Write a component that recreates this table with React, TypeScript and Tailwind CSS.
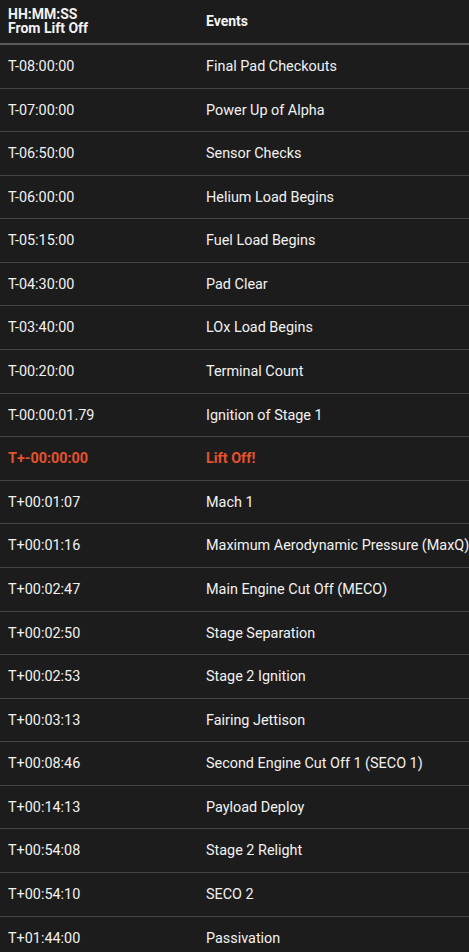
const rows: [string, string, boolean?][] = [
  ['T-08:00:00', 'Final Pad Checkouts'],
  ['T-07:00:00', 'Power Up of Alpha'],
  ['T-06:50:00', 'Sensor Checks'],
  ['T-06:00:00', 'Helium Load Begins'],
  ['T-05:15:00', 'Fuel Load Begins'],
  ['T-04:30:00', 'Pad Clear'],
  ['T-03:40:00', 'LOx Load Begins'],
  ['T-00:20:00', 'Terminal Count'],
  ['T-00:00:01.79', 'Ignition of Stage 1'],
  ['T+-00:00:00', 'Lift Off!', true],
  ['T+00:01:07', 'Mach 1'],
  ['T+00:01:16', 'Maximum Aerodynamic Pressure (MaxQ)'],
  ['T+00:02:47', 'Main Engine Cut Off (MECO)'],
  ['T+00:02:50', 'Stage Separation'],
  ['T+00:02:53', 'Stage 2 Ignition'],
  ['T+00:03:13', 'Fairing Jettison'],
  ['T+00:08:46', 'Second Engine Cut Off 1 (SECO 1)'],
  ['T+00:14:13', 'Payload Deploy'],
  ['T+00:54:08', 'Stage 2 Relight'],
  ['T+00:54:10', 'SECO 2'],
  ['T+01:44:00', 'Passivation'],
];

export default function App(): React.ReactElement {
  return (
    <div
      className="min-h-screen w-[469px] overflow-hidden bg-[#1c1c1c] text-[#f2f2f2]"
      style={{ fontFamily: 'Roboto, sans-serif' }}
    >
      {/* Header */}
      <div className="flex h-[45px] items-center border-b-2 border-[#5a5a5a]">
        <div className="w-[206px] pl-[8px] text-[14px] font-bold leading-[13.5px]">
          HH:MM:SS
          <br />
          From Lift Off
        </div>
        <div className="text-[14px] font-bold">Events</div>
      </div>

      {/* Rows */}
      {rows.map(([time, event, red]) => (
        <div
          key={time}
          className={`flex h-[43.58px] items-center border-b border-[#444444] pt-px text-[14.4px] whitespace-nowrap ${
            red ? 'font-bold text-[#e5512d]' : ''
          }`}
        >
          <div className="w-[206px] shrink-0 pl-[8px]">{time}</div>
          <div>{event}</div>
        </div>
      ))}
    </div>
  );
}
